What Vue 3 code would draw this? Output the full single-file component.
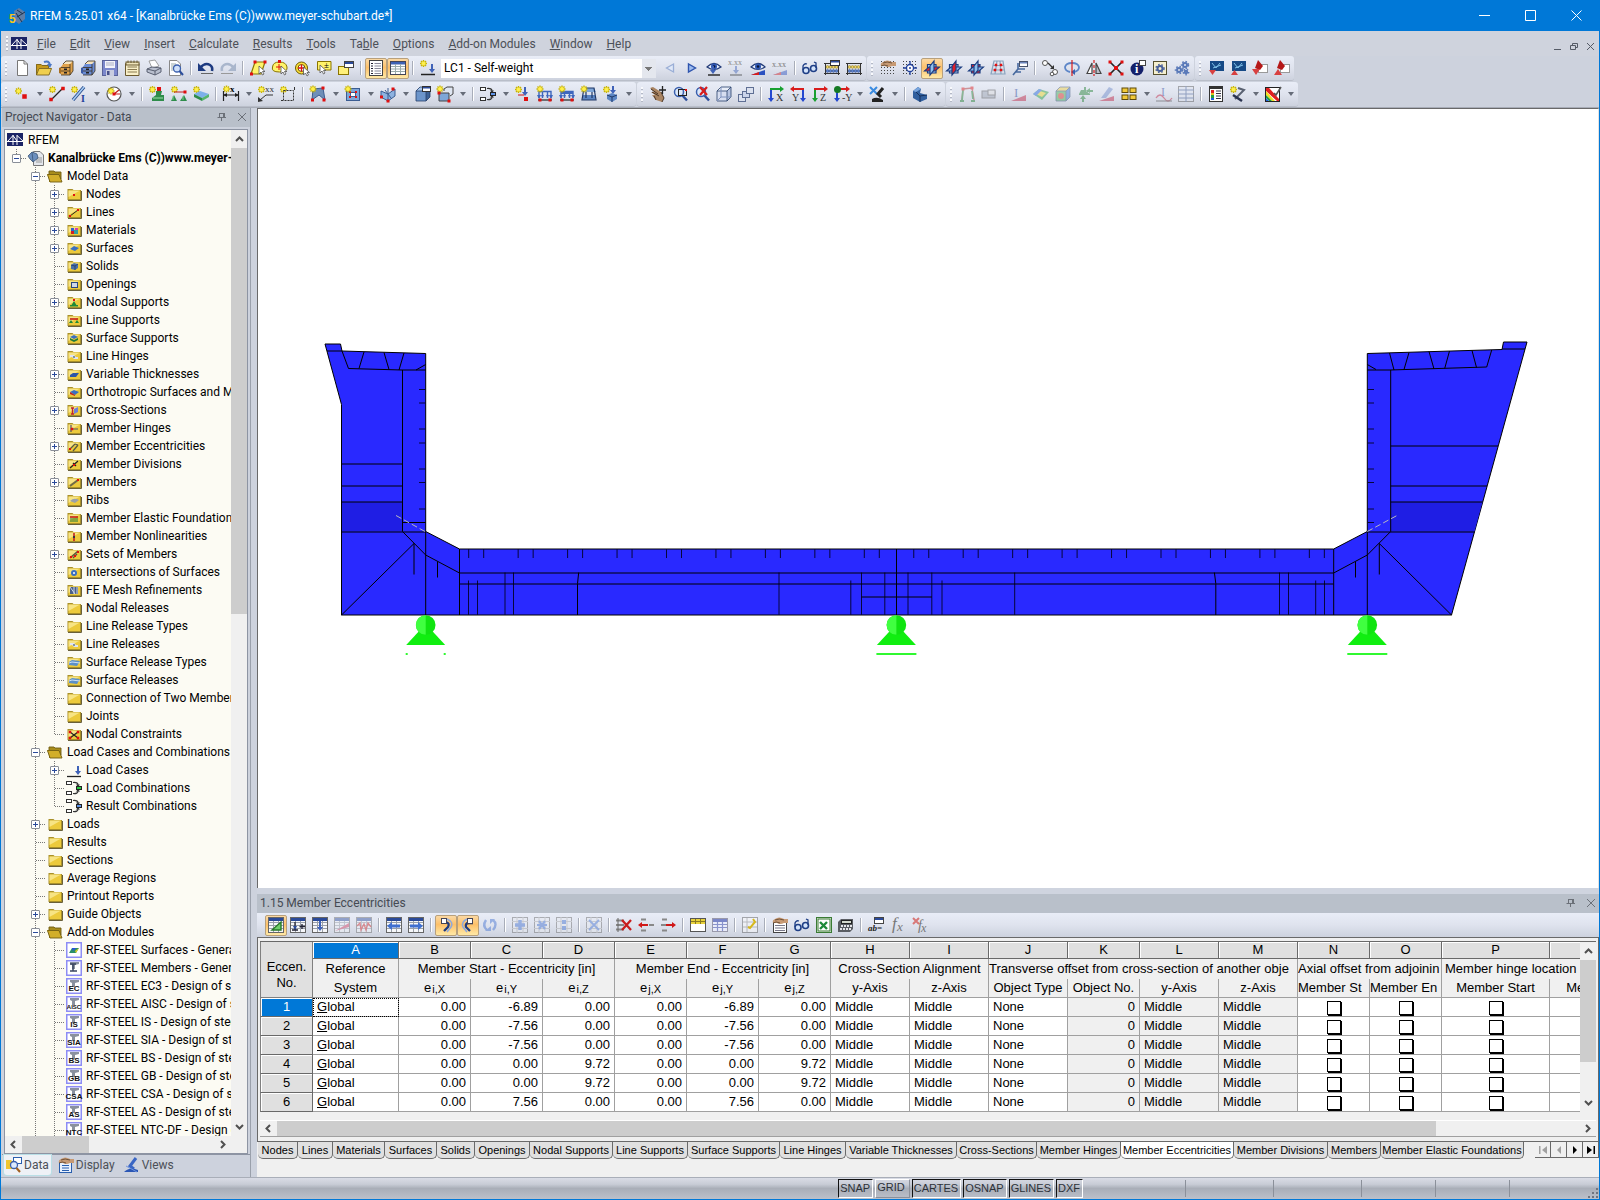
<script setup>
import { ref } from 'vue'

/* ---- small drawing helpers for the 16x16 icon set ---- */
const p = (d, stroke = '#444', w = 1, fill = 'none') =>
  `<path d="${d}" stroke="${stroke}" stroke-width="${w}" fill="${fill}"/>`
const f = (d, fill) => `<path d="${d}" fill="${fill}"/>`
const r = (x, y, w, h, fill = '#fff', stroke = 'none') =>
  `<rect x="${x}" y="${y}" width="${w}" height="${h}" fill="${fill}" stroke="${stroke}"/>`
const c = (x, y, rad, fill = 'none', stroke = 'none', w = 1) =>
  `<circle cx="${x}" cy="${y}" r="${rad}" fill="${fill}" stroke="${stroke}" stroke-width="${w}"/>`
const t = (x, y, s, size = 7, fill = '#444', family = 'Liberation Serif', extra = '') =>
  `<text x="${x}" y="${y}" font-size="${size}" fill="${fill}" font-family="${family}, serif" ${extra}>${s}</text>`
const star = (x = 3.5, y = 3.5) =>
  p(`M${x - 3.5} ${y}H${x + 3.5}M${x} ${y - 3.5}V${y + 3.5}M${x - 2.5} ${y - 2.5}L${x + 2.5} ${y + 2.5}M${x + 2.5} ${y - 2.5}L${x - 2.5} ${y + 2.5}`, '#c9b400', 1.4) +
  c(x, y, 2, '#fff04a')
const dot = (x, y, s = 3) => r(x - s / 2, y - s / 2, s, s, '#e01010')
const cursor = (x, y) => p(`M${x} ${y}l0 8l2 -2l1.500 3l1.500 -1l-1.500 -2.500l2.500 0z`, '#555', 0.8, '#fff')
const down = (x, y, h = 7, col = '#3f62b8') =>
  f(`M${x - 1} ${y}h2v${h - 4}h2l-3 4l-3 -4h2z`, col)
const gridLines = (col = '#9aa0aa') => r(0.5, 0.5, 15, 15, '#f6f7fa', '#666') +
  p('M1 5.500H15M1 8.500H15M1 11.500H15M5.500 3V15M10.500 3V15', col) + r(1, 1, 14, 3, '#2a4a9a')
const dotsGrid = [1, 4, 7, 10, 13].map(y => [1, 4, 7, 10, 13].map(x => r(x, y, 1, 1, '#444')).join('')).join('')
const cube = (a, b, d) => f('M1 5L5 1H15V11L11 15H1Z', b) + f('M1 5H11V15H1Z', a) + f('M1 5L5 1H15L11 5Z', d) +
  p('M1 5L5 1H15V11L11 15H1V5H11V15M11 5L15 1', '#27406a', 0.8)
const lens = c(7, 6, 4.5, '#dbe8fa', '#3a5fae', 1.5) + p('M10.500 9.500L15 14.500', '#2d4f9c', 2.5)
const planes = (m) => f('M3 4H12V13H3Z', m === 3 ? '#e0202a' : '#a9cdf3') + p('M3.500 4.500H12V13H3.500Z', '#1d3d80', 1.2) +
  f('M0 11L5 7H16L11 11Z', m === 1 ? '#e0202a' : '#8fb8ea') + p('M0.500 11L5 7H15.500L11 11Z', '#1d3d80', 1.1) +
  f('M6 6L10 1V10L6 15Z', m === 2 ? '#e0202a' : '#8fc0ee') + p('M6 6L10 1V10L6 15Z', '#1d3d80', 1.2)
const cabinet = (a, b) => f('M1 8L5 6V15L1 13Z', b) + f('M5 4L8 1H15V11L12 15H3V7Z', a) + f('M5 4L8 1H15L12 4Z', '#f6e3bd') +
  p('M3 7.500H12M12 4V15M3 11H12M5 4L8 1H15V11L12 15H3', '#3b3020', 0.8) + r(6, 8.500, 3, 1.500, '#222') + r(6, 12, 3, 1.500, '#222')
const gear = (x, y, s, col) => c(x, y, s, 'none', col, 2) +
  `<circle cx="${x}" cy="${y}" r="${s + 1.5}" fill="none" stroke="${col}" stroke-width="1.500" stroke-dasharray="1.500 1.800"/>`
const hand = f('M3 2Q7 -1 12 2L16 2V6H12Q8 8 5 6L1 6Q0 3 3 2Z', '#c79a74') + p('M3 3Q7 1 12 3M1 6Q4 4 8 6', '#5b4029', 0.8)
const glasses = c(4, 10.500, 3, '#d3e3fb', '#1f3f86', 1.600) + c(11.500, 8.500, 3, '#d3e3fb', '#1f3f86', 1.600) + p('M1 10V6Q2 3 5 4M14 8V3L12 2', '#1f3f86', 1.300)
const abacus = p('M1.500 3V15M14.500 3V15M0 3.500H16M0 13.500H16', '#333') +
  [4, 7, 10, 13].map(x => c(x - 0.5, 7, 1.4, '#f6d95c', '#7b6a20', 0.5) + c(x - 0.5, 11, 1.4, '#5f86d4', '#27407a', 0.5)).join('')
const loadFrame = p('M2 12V5.500H14V12M5.500 6V12M10.500 6V12', '#3e66bd', 1.400) + f('M0 9H4L2 13ZM12 9H16L14 13ZM4 9H7L5.500 12ZM9 9H12L10.500 12Z', '#3e66bd') + p('M1 14H15', '#333', 1.300) + dot(3, 14) + dot(13, 14)
const axes = (a, b, lab) => p('M3 2V14', b, 2) + p('M2 3H13', a, 2) + f('M12 0L16 3L12 6Z', a) + f('M0 12H6L3 16Z', b) + t(8, 15, lab, 10, '#333')
const eye = p('M1 7Q8 0 15 7Q8 12 1 7Z', '#223b78', 1.200, '#e8effb') + c(8, 6.500, 3, '#2e57b3') + c(8, 6.500, 1.200, '#0a1430')
const comb = (col) => r(0.5, 1.500, 5, 3, '#fff', '#333') + r(0.5, 11.500, 5, 3, '#fff', '#333') +
  p('M7 2.500Q12 2 12 5M7 13.500Q12 14 12 11', '#333', 1.200) + f('M10 4.500H14L12 7ZM10 11.500H14L12 9Z', '#333') + r(10.500, 6.500, 5, 3, col, '#222')
const faded = s => `<g opacity="0.45">${s}</g>`

const I = {
  page: p('M3.500 0.500H10L13.500 4V15.500H3.500Z', '#777', 1, '#fff') + p('M10 0.500V4H13.500', '#777'),
  open: f('M0 4H5L6 5H13V15H0Z', '#c79a1c') + f('M3 8H16L13 15H0Z', '#f0cf4e') + p('M0.500 15V4.500H5L6 5.500H12.500V8M0.500 15L3 8.500H15.500L13 15Z', '#7b6420', 0.9) + p('M8 2Q13 0 14 5', '#4c78c4', 2) + f('M11 4H16L14 8Z', '#4c78c4'),
  cabO: cabinet('#e0a24c', '#a86f22'),
  cabB: cabinet('#6a8cd6', '#3b5aa5'),
  save: r(0.5, 0.5, 15, 15, '#7c88cc', '#5a6399') + r(3, 1, 10, 7, '#f4f4fa') + r(4, 10, 8, 6, '#c9cde0') + r(5, 11, 2.500, 4, '#47508a') + p('M4 3H12M4 5H12', '#a9adc4'),
  book: p('M1.500 3.500H15V15.500H1.500Z', '#6b5a30', 1, '#f8efc8') + p('M3.500 7H13M3.500 9.500H13M3.500 12H13', '#8a7a50') + r(2, 2, 13, 3, '#efe4bb', '#6b5a30') + p('M4 0.500V3M7 0.500V3M10 0.500V3M13 0.500V3', '#6b5a30'),
  print: f('M3 1L9 0L13 6L6 8Z', '#fff') + p('M3 1L9 0L13 6L6 8Z', '#888', 0.8) + f('M1 9L6 7L15 8V12L9 15L1 12Z', '#b9bfce') + p('M1 9L6 7L15 8V12L9 15L1 12ZM1 9L9 11L15 8M9 11V15', '#4e5566', 0.9),
  preview: p('M1.500 0.500H9L12.500 4V15.500H1.500Z', '#888', 1, '#fff') + p('M3 4H8M3 6H10M3 8H7M3 10H6', '#9aa', 1) + c(9, 8.500, 3.500, '#cfe0fa', '#3a5fae', 1.300) + p('M11.500 11L15 15', '#2d4f9c', 2),
  undo: p('M2 8Q7 2 12 5Q15 7 14 11', '#1d3a80', 2.600) + f('M0 3V11H8Z', '#1d3a80') + p('M3 13.500H15', '#666'),
  redo: p('M14 8Q9 2 4 5Q1 7 2 11', '#a9b6cc', 2.600) + f('M16 3V11H8Z', '#a9b6cc') + p('M1 13.500H13', '#999'),
  selPoly: p('M1 14L5 2H15L11 14Z', '#8a7400', 1.200, '#fff36a') + dot(5, 2) + dot(15, 2) + dot(1.500, 14) + cursor(9, 6),
  selCirc: p('M0.500 7Q1 2 7.500 2T15 7T7.500 12T0.500 7Z', '#8a7400', 1, '#fff36a') + p('M4 7H10M7 4V10', '#e01010') + dot(7.500, 1.500) + cursor(9, 6),
  selRing: c(7.500, 8, 6, '#ffe23a', '#6b5a00', 1) + c(7.500, 8, 3.500, '#fff', '#6b5a00', 1) + p('M4 8H11M7.500 4.500V11.500', '#e01010', 1.300) + cursor(9.500, 7),
  selBox: p('M1.500 1.500H15V10H1.500Z', '#8a7400', 1, '#fff36a') + t(8, 8, '±', 9, '#000') + cursor(4, 5),
  selWin: r(0.5, 6.500, 10, 8, '#fff07a', '#8a7400') + r(6.500, 1.500, 9, 6, '#fff', '#444') + r(7, 2, 8, 2, '#2a4a9a'),
  list: r(1.500, 0.5, 13, 15, '#fff', '#444') + p('M3 3.500H5M3 6H5M3 8.500H5M3 11H5M3 13.500H5', '#223') + p('M6.500 3.500H13M6.500 6H13M6.500 8.500H13M6.500 11H13M6.500 13.500H13', '#889'),
  tabl: r(0.5, 1.500, 15, 13, '#fff', '#445') + r(1, 2, 14, 2.500, '#3e62b4') + p('M1 6.500H15M1 9H15M1 11.500H15M5.500 4V14M10.500 4V14', '#9aa'),
  newLC: star() + p('M1 14.500H15', '#222', 1.500) + down(12, 4, 9),
  prev: p('M11.500 4V12L4.500 8Z', '#9aaed6', 1.300, '#dfe8f8'),
  next: p('M4.500 4V12L11.500 8Z', '#2f55ae', 1.400, '#9dbcf0'),
  showLoad: eye + p('M2 15H14', '#222', 1.400) + down(7, 6, 8),
  xxx: t(0, 5, 'x.xx', 8, '#888') + faded(down(8, 6, 8) + p('M2 15H14', '#222', 1.400)),
  eyeRes: eye + f('M1 15L15 10V15Z', '#2b51c0') + f('M1 15L9 12V15Z', '#d81c1c'),
  xxRes: t(0, 7, 'x.xx', 8, '#777') + faded(f('M1 15L15 10V15Z', '#2b51c0') + f('M1 15L9 12V15Z', '#d81c1c')),
  glasses,
  abacus, abacusWin: abacus + r(6.500, 0.5, 9, 5, '#fff', '#333') + r(7, 1, 8, 1.500, '#2a4a9a'),
  handGrid: dotsGrid + hand,
  snapGrid: dotsGrid + p('M8 1V15M1 8H15', '#1f3f9a', 1.300) + c(8, 8, 3.500, '#fff', '#1f3f9a', 1.300) + c(8, 8, 1, '#1f3f9a'),
  pl1: planes(1), pl2: planes(2), pl3: planes(3),
  mesh: p('M4 1H13L15 14H1ZM7 1L5 14M10 1L11 14M3 5.500H14M2 10H14.500', '#8aa3bd', 1.200) + dot(6, 5, 2.500) + dot(11, 10, 2.500) + dot(11, 5, 2.500) + dot(5, 10, 2.500),
  wp: r(7.500, 1.500, 8, 5, '#fff', '#46506a') + r(8, 2, 7, 1.500, '#6c86bd') + p('M1 15L6 9V3M6 9H13M3 12L9 12', '#46689e', 1.600),
  copy: c(3, 3, 2.500, '#fff', '#555') + c(13, 12, 2.500, '#fff', '#555') + c(10, 14, 1.800, '#fff', '#555') + p('M6 3L11 8', '#333', 1.200) + f('M12 5V9H8Z', '#333'),
  rotate: p('M6 12Q1 11 1 7Q2 3 8 3T15 7Q15 11 10 12', '#5d86c8', 1.800) + f('M11 9V15L7 12Z', '#3a62ae') + p('M8 0V16', '#d81c1c', 1.200),
  mirror: p('M1 13.500L6 3V13.500Z', '#444', 1.200, '#fff') + p('M15 13.500L10 3V13.500Z', '#444', 1.200, '#b9bec8') + p('M8 0V3M8 5V8M8 10V13M8 14V16', '#d81c1c', 1.200),
  scale: p('M2 2L14 14M14 2L2 14', '#222', 1.600) + dot(2, 2) + dot(14, 2) + dot(2, 14) + dot(14, 14) + dot(8, 8, 4),
  info: c(7, 9, 6.500, '#14206a') + t(5, 13, 'i', 12, '#fff', 'Liberation Serif', 'font-weight="bold"') + r(9.500, 0.5, 6, 5, '#fff', '#444'),
  setWin: r(1.500, 1.500, 13, 13, '#f5efcf', '#55502f') + gear(8, 8.500, 2.500, '#49609a'),
  gears: gear(5, 10, 2, '#5878b8') + gear(11, 5, 2, '#5878b8') + gear(12, 12, 1.200, '#5878b8'),
  scrDown: r(2, 1, 14, 10, '#164a86') + p('M4 3L8 8L12 3M5 8L13 5', '#7fc1e8') + f('M1 10H8L4.500 15Z', '#d84040'),
  scrUp: r(2, 1, 14, 10, '#164a86') + p('M4 3L8 8L12 3M5 8L13 5', '#7fc1e8') + f('M1 15H8L4.500 10Z', '#d84040'),
  pdfDown: r(6.500, 4.500, 9, 8, '#fff', '#999') + f('M6 0L11 6L8 10L3 8Z', '#b51818') + f('M0 9H8L4 15Z', '#d84040'),
  pdfUp: r(6.500, 4.500, 9, 8, '#fff', '#999') + f('M6 0L11 6L8 10L3 8Z', '#b51818') + f('M0 15H8L4 9Z', '#d84040'),
  // second row
  node: star(4.500, 5) + dot(10.500, 10.500, 4.500),
  line: star() + p('M2 14L14 2', '#222', 1.300) + dot(14, 2.500, 3.500) + dot(2, 13.500, 3.500),
  member: star() + p('M2 14L13 1', '#2a4f8e', 3.400) + p('M2 14L13 1', '#a8cdf5', 1.600) + t(10, 16, 'I', 10, '#1f3f9a', 'Liberation Serif', 'font-weight="bold"'),
  circle: c(8, 8, 7, '#fff', '#555', 1.200) + star(5, 5) + p('M8 8L13 4M8 8H14', '#c02020', 1.200) + dot(8, 8, 3),
  nsup: star() + dot(10, 3, 4) + f('M7 5H13L12 9H15V15H3V12L7 9Z', '#2e8c4a') + p('M4 12L14 12', '#9be0a8'),
  lsup: star() + p('M3 6H14', '#c02020') + dot(14, 6) + f('M3 9L6 15H0ZM13 9L16 15H9Z', '#2e8c4a') + p('M2 10V14M12 10V14', '#7dcf8f'),
  ssup: star() + f('M1 8L7 5L16 8L9 12Z', '#7db0ea') + f('M1 8L9 12V15L1 11Z', '#2e8c4a') + f('M16 8L9 12V15L16 11Z', '#56b56d'),
  dim: star(3.500, 3) + p('M0.500 5V15M15.500 5V15M1 9H15', '#222', 1.200) + f('M0 9L4 7V11ZM16 9L12 7V11Z', '#222') + t(7, 6, 'x', 9, '#000', 'Liberation Serif', 'font-weight="bold"'),
  xx: star() + t(7, 6, 'xx', 9, '#333') + p('M2 14L8 9H15', '#333') + f('M0 16V11L5 15Z', '#333'),
  dashBox: star() + `<rect x="3.500" y="4.500" width="10" height="10" fill="none" stroke="#333" stroke-dasharray="2 1"/>` + p('M14.500 1V4M1 14.500H3', '#333'),
  surf: f('M3 3L13 2L15 14L9 9L2 14Z', '#6f8fb8') + p('M3 3L13 2L15 14L9 9L2 14Z', '#3b5d92') + star(3, 3) + dot(13, 2) + dot(2.500, 14) + dot(14, 14),
  opening: r(1.500, 2.500, 13, 12, '#7ea6d8', '#3b5d92') + r(5.500, 6.500, 5, 4, '#fff', '#3b5d92') + dot(5, 6, 2) + dot(11, 6, 2) + dot(5, 11, 2) + dot(11, 11, 2) + star(3, 3),
  inter: f('M1 5L8 8L15 3V10L8 15L1 11Z', '#8db2e0') + p('M1 5L8 8L15 3V10L8 15L1 11ZM8 2V15M5 4L11 12', '#3b5d92') + dot(13, 3) + dot(1.500, 11) + dot(8, 15),
  solid: cube('#6c95cb', '#3c6297', '#a9c7ec') + r(7.500, 0.5, 8, 5, '#fff', '#333') + r(8, 1, 7, 1.500, '#2a4a9a'),
  solid2: star(3, 3) + f('M2 7H12V15H2Z', '#7ea6d8') + f('M7 4V1H15V10H12V5H7Z', '#dfe6f2') + p('M2 7H12V15H2ZM7 5V3L10 1H16V8L13 10', '#444') + dot(2, 7) + dot(12, 15),
  comb: comb('#5f93e6'),
  load1: star() + down(10, 1, 9) + p('M3 9L9 9', '#d01010') + dot(11, 13, 4),
  load2: loadFrame + star(3, 3), load3: loadFrame + p('M2 7H14', '#3e66bd', 2) + star(3, 3),
  load4: f('M3 2H13L15 6H1Z', '#7ea6d8') + r(2, 9, 12, 5, '#5c86c4') + p('M3 2H13L15 14H1ZM5 6V12M11 6V12', '#1f3766', 1.200) + star(3, 3),
  load5: star() + down(10, 0, 8) + f('M4 9L9 7L14 9V13L9 16L4 13Z', '#5c86c4') + p('M4 9L9 11L14 9M9 11V16', '#1f3766'),
  handMove: f('M0 2L3 1L11 6L14 12L12 16L6 14L2 9L5 9L1 6L4 6Z', '#a98462') + p('M1 3L8 8M2 6L9 10M6 14L4 10M11 6L14 12L12 16', '#4b3626', 1) + p('M12.500 0V8M9 4H16', '#222', 1.300),
  zoomBox: lens + r(6.500, 3.500, 8, 6, 'none', '#222') + dot(14, 4, 2),
  zoomX: lens + p('M6 1L13 9M13 1L6 9', '#d81c1c', 2.200),
  wire: cube('#d7def0', '#b6c3e0', '#e8edf8') + p('M5 1V11L1 15M5 11H15', '#7f92bd'),
  cubes: r(0.5, 8.500, 7, 7, '#dbe1ef', '#5f6f94') + r(4.500, 5.500, 7, 6, '#cbd4ea', '#5f6f94') + r(8.500, 1.500, 7, 6, '#dbe1ef', '#5f6f94'),
  axX: axes('#18a030', '#2448d0', 'X'), axY: p('M13 2V14', '#2448d0', 2) + p('M3 3H14', '#d81c1c', 2) + f('M4 0L0 3L4 6Z', '#d81c1c') + f('M10 12H16L13 16Z', '#2448d0') + t(2, 15, 'Y', 10, '#333'),
  axZ: axes('#d81c1c', '#18a030', 'Z'), axmY: axes('#d81c1c', '#2448d0', '-Y') + c(3.500, 3.500, 3.500, '#157a25'),
  micro: p('M1 1L8 8M8 1L1 8', '#3a8be0', 2) + p('M14 2L9 8L12 11', '#222', 3) + f('M3 13Q8 10 14 14V16H3Z', '#222'),
  clip: f('M1 5L6 1L9 3L8 7L15 9V13L8 16L1 12Z', '#315f9e') + f('M1 5L6 1L9 3L4 6Z', '#79a5dd') + p('M4 6L8 10L15 9M8 10V16', '#16315c'),
  frame: faded(p('M3 14L4 3L13 2L15 14', '#b03030', 1.400) + p('M1 15H5M12 15H16M3 14L4 4M13 5L14 13', '#208030', 1.800) + dot(4, 3) + dot(13, 2)),
  flash: faded(r(1, 5, 13, 7, '#9aa2b0', '#555') + r(7, 4, 7, 5, '#ddd', '#555')),
  resI: faded(t(3, 11, 'I', 13, '#1f3f9a') + f('M0 15L15 9V15Z', '#c02040')),
  rainbow: faded(f('M0 8L6 3L16 6L9 14Z', '#25a040') + f('M3 8L7 5L13 7L9 11Z', '#f0d820') + f('M0 8L6 3L9 4L3 10Z', '#2060e0')),
  rcube: faded(cube('#40b050', '#3070d0', '#f0d040') + c(6, 10, 3, '#e03020')),
  greenArr: faded(p('M8 1V6M10 5H16M6 12V16', '#208030', 2) + f('M4 4H11L13 8H2ZM2 8H13V9H2ZM13 2L9 5L13 8ZM6 9L9 13H3Z', '#208030')),
  pen: faded(f('M2 12L10 1L14 3L7 12Z', '#6a88c8') + f('M0 15L15 10V15Z', '#c02040')),
  quad: [[1, 2], [9, 2], [1, 9], [9, 9]].map(([x, y]) => r(x, y, 6, 4.500, '#f1c93a', '#5e4a08')).join(''),
  beam: faded(t(5, 10, 'I', 12, '#1f3f9a') + p('M0 12Q4 6 8 12T16 12', '#c02040', 1.300) + p('M0 15H16', '#333')),
  gridI: faded(r(0.5, 0.5, 15, 15, '#dfe4f0', '#555') + p('M8 0V16M0 4H16M0 8H16M0 12H16', '#34508c')),
  legend: r(1.500, 0.5, 13, 15, '#fff', '#333') + p('M2 2H14', '#333', 2) + r(3, 4, 3, 3, '#e02020') + r(3, 7, 3, 2, '#e8c020') + r(3, 9, 3, 3, '#20a040') + r(3, 12, 3, 2, '#2060e0') + p('M8 5H13M8 7.500H13M8 10H13M8 12.500H13', '#334'),
  tools: star() + p('M8 2L14 4L5 13', '#5a6272', 2) + p('M3 9L12 15', '#2a3350', 2.500),
  colors: r(0.5, 1.500, 14, 14, '#fff', '#222') + f('M1 2H4L14 13V15H12L1 5Z', '#e02020') + f('M1 5L10 15H7L1 9Z', '#f0e020') + f('M1 9L7 15H4L1 12Z', '#20a040') + f('M1 12L4 15H1Z', '#2060e0') + p('M9 7L11 9L16 1', '#555', 1.600),
  // table toolbar
  tEdit: gridLines() + f('M4 13L13 5V13Z', '#6fd06a') + p('M4 13L13 5V13Z', '#2a7a2a', 1.400),
  tPlus: gridLines() + p('M5 5V13M2 13H8M12 7V12M9.500 9.500H15', '#223', 1.300) + f('M3 9H7L5 13Z', '#2a4a9a'),
  tDown: gridLines() + down(8, 4, 10),
  tRes: faded(gridLines() + f('M1 14L15 6V10Z', '#d04060')),
  tWave: faded(gridLines() + p('M1 9L4 6L5 13L8 7L10 13L12 6L15 10', '#d02020', 1.300)),
  tLeft: gridLines() + f('M1 9L6 5V7.500H14V10.500H6V13Z', '#3f6fd0'),
  tRight: gridLines() + f('M15 9L10 5V7.500H2V10.500H10V13Z', '#3f6fd0'),
  sync1: p('M3 5H8Q12 6 10 10L6 14', '#1d3a80', 2.300) + p('M9 2Q16 5 13 10L9 15', '#8fa9dc', 1.500) + r(3.500, 1.500, 5, 5, '#fff', '#445'),
  sync2: p('M13 6H9Q5 6 6 10L10 14', '#1d3a80', 2.300) + p('M7 2Q1 5 3 10L7 15', '#8fa9dc', 1.500) + r(7.500, 1.500, 5, 5, '#fff', '#445'),
  sync3: faded(p('M4 3Q0 9 5 13M11 13Q16 7 11 3', '#3f6fd0', 2.400) + f('M3 14H9V9ZM13 2H8V7Z', '#3f6fd0')),
  gPlus: faded(r(0.5, 0.5, 15, 15, '#e9ecf2', '#666') + p('M0 4.500H16M0 11.500H16M5 0V16M11 0V16', '#aaa') + p('M8 3V13M3 8H13', '#3f6fd0', 3.500)),
  gX: faded(r(0.5, 0.5, 15, 15, '#e9ecf2', '#666') + p('M0 4.500H16M0 11.500H16M5 0V16M11 0V16', '#aaa') + p('M5 4L11 12M11 4L5 12M3 8H13', '#3f6fd0', 2.200)),
  gDiv: faded(r(0.5, 0.5, 15, 15, '#e9ecf2', '#666') + p('M0 4.500H16M0 11.500H16M5 0V16M11 0V16', '#aaa') + r(6, 3, 4, 4, '#3f6fd0') + r(6, 9, 4, 4, '#3f6fd0')),
  gDel: faded(r(0.5, 0.5, 15, 15, '#e9ecf2', '#666') + p('M0 4.500H16M0 11.500H16M5 0V16M11 0V16', '#aaa') + p('M3 3L13 13M13 3L3 13', '#3f6fd0', 1.800)),
  rDel: p('M0 3.500H8M0 8H8M0 12.500H8', '#888', 1.800) + p('M2 1V15', '#666', 1) + p('M6 3L15 13M15 3L6 13', '#c81c1c', 2.300),
  rLeft: p('M8 2.500H3M8 13.500H3M11 8H16', '#888', 2) + f('M0 8L4 5V7H10V9H4V11Z', '#d01818'),
  rRight: p('M2 2.500H7M2 13.500H7M1 8H6', '#888', 2) + f('M16 8L12 5V7H6V9H12V11Z', '#d01818'),
  yTab: r(0.5, 1.500, 15, 13, '#fff', '#555') + r(1, 2, 14, 5, '#e8d23c') + p('M5.500 2V7M10.500 2V7M1 4.500H15', '#8a7a20'),
  bTab: r(0.5, 1.500, 15, 13, '#e9ecfa', '#99a') + r(1, 2, 14, 3, '#7a86c8') + p('M1 7.500H15M1 10.500H15M5.500 5V14M10.500 5V14', '#8a94cc', 1.200),
  yPen: faded(r(0.5, 0.5, 15, 15, '#fff', '#555') + p('M1 5H15M1 10H15M5 1V15', '#888')) + p('M11 2L13 5L8 11L6 10', '#d6b81c', 2),
  handDoc: r(1.500, 4.500, 13, 11, '#fff', '#444') + p('M3 8.500H13M3 11H13M3 13.500H13', '#778') + hand,
  excel: r(0.5, 0.5, 15, 15, '#e9f4e6', '#3a7a34') + r(2, 2, 12, 12, '#fff', '#3a7a34') + p('M4 5L11 12M11 5L4 12', '#1f8a3a', 2.400),
  calc: f('M3 2H15V12L12 15H0V5Z', '#5a5d63') + r(3.500, 3.500, 10, 3, '#d4dacf', '#222') + [3, 6, 9, 12].map(x => r(x, 8, 2, 2, '#e6e6ea') + r(x - 1, 11, 2, 2, '#e6e6ea')).join(''),
  abEq: r(6.500, 0.5, 9, 6, '#fff', '#444') + r(7, 1, 8, 2, '#2a4a9a') + t(0, 14, 'ab=', 9, '#222', 'Liberation Serif', 'font-weight="bold" font-style="italic"'),
  fx: t(2, 12, 'f', 17, '#777', 'Liberation Serif', 'font-style="italic"') + t(7, 14, 'x', 13, '#777', 'Liberation Serif', 'font-style="italic"'),
  fxx: t(6, 13, 'f', 14, '#777', 'Liberation Serif', 'font-style="italic"') + t(9, 15, 'x', 12, '#777', 'Liberation Serif', 'font-style="italic"') + p('M1 1L7 7M7 1L1 7', '#d87878', 2),
  // navigation tabs
  navData: f('M0 3H5L6 4H11V12H0Z', '#f0c52e') + r(7.500, 0.5, 8, 6, '#fff', '#2a5fae') + c(8, 8, 3.500, '#dceaff', '#3a5fae', 1.300) + p('M10.500 11L14 15', '#a06020', 2),
  navDisp: r(1.500, 4.500, 12, 11, '#e9f1fd', '#2a5fae') + p('M4 8.500H11M4 11H11M4 13.500H11', '#2a5fae') + hand,
  navView: f('M0 15Q6 9 14 13V15Z', '#2a56b4') + p('M12 1L6 9L10 12', '#3a66c4', 3) + p('M2 9L13 15', '#6f95e0'),
  // tree
  logo: r(0, 1, 16, 13, '#1b2465') + p('M0 9.500H16M1 9L6 3.500L10 9M6 3V13M10 3V13M10 3.500L16 9', '#fff', 1),
  model: p('M5.500 1.500H12L15.500 5V15.500H5.500Z', '#777', 1, '#e4e7ec') + p('M8 8H14M8 10H14M8 12H14', '#999') + f('M0 6L4 2L9 4L10 8L5 12L2 9Z', '#6c8fbe') + p('M0 6L4 2L9 4L10 8L5 12L2 9ZM4 2L5 12', '#3b5577', 0.8),
}
const folder = f('M1.500 3H6.500L7.500 4H15V14H1.500Z', '#a8902a') + f('M2.500 4.500H14V13H2.500Z', '#ecca3c') + f('M2.500 4.500H14L2.500 11Z', '#f7e484') + p('M2 14.500H15.500V5', '#69603a')
const folderOpen = f('M2 3H7L8 4H14V14H2Z', '#a88c1a') + f('M0 6H12L15 14H3Z', '#d2ae2a') + p('M0.500 6.500H12L15 14H3ZM2 6V3H7L8 4H14V11', '#6f5c12', 0.9)
const mini = {
  dot: dot(8, 9, 2), line: p('M4 12L12 6', '#222') + dot(12, 6, 2) + dot(4, 12, 2),
  mat: r(5, 6, 3, 3, '#3060d0') + r(5, 9, 3, 3, '#d02020') + r(8, 8, 4, 4, '#30a0a0') + r(9, 6, 3, 2, '#d040b0'),
  surf: f('M4 9L8 6L13 8L9 11Z', '#3a6fc0'), solid: f('M5 7L8 5L12 6V10L9 12L5 11Z', '#4a6fa8') + p('M5 7L9 8V12M9 8L12 6', '#223c66', 0.8),
  open: r(5.500, 6.500, 6, 5, '#cfd8e8', '#2b4a80'), ns: dot(8, 6, 2) + f('M8 7L11 12H5Z', '#1f8a3a') + r(4, 11, 8, 1.500, '#1f8a3a'),
  ls: p('M4 7H12', '#c01010', 1.500) + f('M5 8L7 11H3ZM11 8L13 11H9Z', '#1f8a3a'), ss: f('M4 7L8 5L12 7L8 9Z', '#3a6fc0') + f('M4 8L8 10V12L4 10ZM12 8L8 10V12L12 10Z', '#1f7a3a'),
  hinge: f('M4 7H8L10 9H12V11H8L6 9H4Z', '#dfe5f2') + c(8, 9, 1, '#678'), thick: f('M4 9L7 7H13L10 11H4Z', '#2a56a8'),
  ortho: f('M4 8L8 6L13 8L9 11Z', '#3a6fc0') + f('M4 8L9 11V12L4 10Z', '#c02020'), cs: p('M5 6H8M5 12H8M6.500 6V12', '#c02030', 1.300) + f('M8 7L12 5V10L8 12Z', '#6f80d8'),
  mh: p('M5 5V12M6 9H12', '#556', 1.200) + dot(6, 9, 2.500), ecc: p('M4 11L9 6M7 13L12 7M9 6L12 7', '#5a5a40', 1.300) + dot(4, 11, 2), div: p('M4 12L12 5M7 7L10 10', '#222', 1.300) + dot(8, 9, 2),
  mem: p('M4 12L12 6', '#6f6a4a', 2) + dot(12, 6, 2), rib: f('M4 9Q8 5 13 8L9 11Z', '#9aa0a8'), el: p('M4 7H12', '#c01010', 1.500) + p('M5 8V12M7 8V12M9 8V12M11 8V12', '#1f7a3a'),
  nl: p('M8 5V13', '#c02020', 1.600) + r(7, 8, 2, 2, '#334'), sets: p('M4 12L12 5M7 12L11 8', '#554', 1.300) + dot(12, 6, 2) + dot(5, 11, 2) + dot(9, 10, 2),
  ints: c(8, 9, 3, '#3a6fc0') + c(8, 9, 1, '#fff'), fe: r(4, 5, 8, 7, '#4a5f88') + p('M4 5L9 12M8 5V12M11 5V12', '#cfd8e8'), rel: f('M3 8L6 6L14 7L11 12L3 11Z', '#5a8fc8') + p('M3 9L6 8L14 9', '#cfe2f6'),
  con: p('M4 6L12 12M12 6L4 12', '#222', 1.200) + dot(4, 6, 2.500) + dot(12, 6, 2.500) + dot(4, 12, 2.500) + dot(12, 12, 2.500),
}
const modIcon = s => r(1, 1, 14, 14, '#fff', '#8d8df5') + r(0.5, 0.5, 15, 15, 'none', '#8d8df5') +
  (s === 'sf' ? f('M3 11L6 6H13L10 11Z', '#2a8f6a') + f('M6 6H10L7 9Z', '#2a50e0') + f('M9 9L13 6L10 11Z', '#e0d020')
    : f('M4 2H13V4L9 5V9H6V5L4 4Z', '#8a919e') + (s === 'I' ? p('M4 4H10M4 11H11M7 4V11', '#3a4660', 1.500) : t(8, 13, s, s.length > 3 ? 6 : 8, '#111', 'Liberation Sans', 'text-anchor="middle" font-weight="bold"')))
const treeIcon = k => k === 'f' ? folder : k === 'fo' ? folderOpen : k === 'lc' ? p('M1 14.500H15', '#222', 1.300) + down(12, 4, 9)
  : k === 'co' ? comb('#28c840') : k === 'rc' ? comb('#5f93e6') : k.startsWith('m:') ? modIcon(k.slice(2)) : mini[k] ? folder + mini[k] : I[k]

const N = (lv, label, icon = 'f', ex = '', last = false) => ({ lv, label, icon, ex, last })
const rows = [
  N(0, 'RFEM', 'logo'), N(1, 'Kanalbrücke Ems (C))www.meyer-schubart.de*', 'model', '-', true), N(2, 'Model Data', 'fo', '-'),
  N(3, 'Nodes', 'dot', '+'), N(3, 'Lines', 'line', '+'), N(3, 'Materials', 'mat', '+'), N(3, 'Surfaces', 'surf', '+'), N(3, 'Solids', 'solid'),
  N(3, 'Openings', 'open'), N(3, 'Nodal Supports', 'ns', '+'), N(3, 'Line Supports', 'ls'), N(3, 'Surface Supports', 'ss'), N(3, 'Line Hinges', 'hinge'),
  N(3, 'Variable Thicknesses', 'thick', '+'), N(3, 'Orthotropic Surfaces and Membranes', 'ortho'), N(3, 'Cross-Sections', 'cs', '+'), N(3, 'Member Hinges', 'mh'),
  N(3, 'Member Eccentricities', 'ecc', '+'), N(3, 'Member Divisions', 'div'), N(3, 'Members', 'mem', '+'), N(3, 'Ribs', 'rib'), N(3, 'Member Elastic Foundations', 'el'),
  N(3, 'Member Nonlinearities', 'nl'), N(3, 'Sets of Members', 'sets', '+'), N(3, 'Intersections of Surfaces', 'ints'), N(3, 'FE Mesh Refinements', 'fe'),
  N(3, 'Nodal Releases'), N(3, 'Line Release Types'), N(3, 'Line Releases', 'hinge'), N(3, 'Surface Release Types', 'rel'), N(3, 'Surface Releases', 'rel'),
  N(3, 'Connection of Two Members'), N(3, 'Joints'), N(3, 'Nodal Constraints', 'con', '', true),
  N(2, 'Load Cases and Combinations', 'fo', '-'), N(3, 'Load Cases', 'lc', '+'), N(3, 'Load Combinations', 'co'), N(3, 'Result Combinations', 'rc', '', true),
  N(2, 'Loads', 'f', '+'), N(2, 'Results'), N(2, 'Sections'), N(2, 'Average Regions'), N(2, 'Printout Reports'), N(2, 'Guide Objects', 'f', '+'), N(2, 'Add-on Modules', 'fo', '-'),
  N(3, 'RF-STEEL Surfaces - General', 'm:sf'), N(3, 'RF-STEEL Members - General', 'm:I'), N(3, 'RF-STEEL EC3 - Design of steel', 'm:EC'),
  N(3, 'RF-STEEL AISC - Design of steel', 'm:AISC'), N(3, 'RF-STEEL IS - Design of steel', 'm:IS'), N(3, 'RF-STEEL SIA - Design of steel', 'm:SIA'),
  N(3, 'RF-STEEL BS - Design of steel', 'm:BS'), N(3, 'RF-STEEL GB - Design of steel', 'm:GB'), N(3, 'RF-STEEL CSA - Design of steel', 'm:CSA'),
  N(3, 'RF-STEEL AS - Design of steel', 'm:AS'), N(3, 'RF-STEEL NTC-DF - Design of steel', 'm:NTC'),
]

/* toolbars: "|" separator, "v" drop arrow, "*" prefix = pressed, "=" load case box */
const s = str => str.split(' ')
const bars1 = [
  s('page open cabO cabB save book print preview | undo redo | selPoly selCirc selRing selBox selWin | *list *tabl | newLC = prev next showLoad xxx eyeRes xxRes | glasses abacusWin abacus'),
  s('handGrid snapGrid *pl1 pl2 pl3 mesh wp | copy rotate mirror scale info setWin gears'),
  s('scrDown scrUp pdfDown pdfUp'),
]
const bars2 = [
  s('node v line member v circle v | nsup lsup ssup | dim v xx dashBox | surf v opening v inter v solid solid2 v | comb v load1 load2 load3 load4 load5 v'),
  s('handMove zoomBox zoomX wire cubes | axX axY axZ axmY v micro v | clip v'),
  s('frame flash | resI rainbow rcube greenArr pen quad v beam gridI | legend tools v colors v'),
]
const tableBar = [s('*tEdit tPlus tDown tRes tWave | tLeft tRight | *sync1 *sync2 sync3 | gPlus gX gDiv | gDel | rDel rLeft rRight | yTab bTab | yPen | handDoc glasses excel calc | abEq fx fxx')]

const menu = [['', 'F', 'ile'], ['', 'E', 'dit'], ['', 'V', 'iew'], ['', 'I', 'nsert'], ['', 'C', 'alculate'], ['', 'R', 'esults'], ['', 'T', 'ools'], ['Ta', 'b', 'le'], ['', 'O', 'ptions'], ['', 'A', 'dd-on Modules'], ['', 'W', 'indow'], ['', 'H', 'elp']]

const cols = [53, 86, 72, 72, 72, 72, 72, 72, 79, 79, 79, 72, 79, 79, 72, 72, 108, 108]
const letters = 'ABCDEFGHIJKLMNOPQ'.split('')
const groups = [['Reference', 1], ['Member Start - Eccentricity [in]', 3], ['Member End - Eccentricity [in]', 3], ['Cross-Section Alignment', 2], ['Transverse offset from cross-section of another obje', 4, 'left'], ['Axial offset from adjoinin', 2, 'left'], ['Member hinge location', 2, 'left pad']]
const subs = [['System'], ['e', 'i,X'], ['e', 'i,Y'], ['e', 'i,Z'], ['e', 'j,X'], ['e', 'j,Y'], ['e', 'j,Z'], ['y-Axis'], ['z-Axis'], ['Object Type'], ['Object No.'], ['y-Axis'], ['z-Axis'], ['Member St', '', 'left'], ['Member En', '', 'left'], ['Member Start'], ['Member End']]
const data = [['-6.89', '0.00'], ['-7.56', '0.00'], ['-7.56', '0.00'], ['0.00', '9.72'], ['0.00', '9.72'], ['7.56', '0.00']]

const sheetTabs = [['Nodes', 40], ['Lines', 35], ['Materials', 52], ['Surfaces', 52], ['Solids', 38], ['Openings', 55], ['Nodal Supports', 83], ['Line Supports', 75], ['Surface Supports', 92], ['Line Hinges', 66], ['Variable Thicknesses', 111], ['Cross-Sections', 80], ['Member Hinges', 84], ['Member Eccentricities', 113], ['Member Divisions', 94], ['Members', 53], ['Member Elastic Foundations', 143]]
const activeTab = ref('Member Eccentricities')
const loadCase = ref('LC1 - Self-weight')

/* ---- cross-section geometry ---- */
const ticks = Array.from({ length: 18 }, (_, i) => 468.7 + i * 49.45).map(x => `M${x} 549.5v9M${x + 15} 549.5v9`).join('')
const wallTicks = [390, 403.5, 429.5, 443.5, 469.5, 483, 509.5]
const wall = wallTicks.map(y => `M419 ${y}H425.7M1367.3 ${y}H1374`).join('') + 'M1367.3 523H1374'
const ribs = [505, 513.5, 779, 861.5, 884.8, 908, 931.8, 1014.7, 1279.5, 1288.5].map(x => `M${x} 573V615.5`).join('')
const shortRibs = [468.5, 477.5, 850.8, 942, 1315.7, 1324.5].map(x => `M${x} 581V615.5`).join('')
const supports = [425.7, 896.4, 1367.3]
</script>

<template>
  <div class="app">
    <header class="title">
      <svg class="ic" viewBox="0 0 16 16"><path d="M5 3L10 0L16 4V11L10 16L6 13Z" fill="#5f7ea6"/><path d="M8 2L14 6M7 5L13 14M16 4L8 9" stroke="#20344f" fill="none"/><text x="0" y="15" font-size="12" font-weight="bold" fill="#f5c518" font-family="Liberation Sans, sans-serif">5</text></svg>
      <h1>RFEM 5.25.01 x64 - [Kanalbrücke Ems (C))www.meyer-schubart.de*]</h1>
      <button aria-label="Minimize"><svg viewBox="0 0 11 11"><path d="M0 5.500H11" /></svg></button>
      <button aria-label="Maximize"><svg viewBox="0 0 11 11"><path d="M0.500 0.500H10.500V10.500H0.500Z" /></svg></button>
      <button aria-label="Close"><svg viewBox="0 0 11 11"><path d="M0.500 0.500L10.500 10.500M10.500 0.500L0.500 10.500" /></svg></button>
    </header>

    <nav class="menu">
      <i class="grip"></i>
      <svg class="ic" viewBox="0 0 16 16" v-html="I.logo"></svg>
      <a v-for="m in menu" :key="m[2]" href="#">{{ m[0] }}<u>{{ m[1] }}</u>{{ m[2] }}</a>
      <span class="mdi">
        <svg viewBox="0 0 42 9"><path d="M1 7.500H8M17.500 3.500H22.500V7.500H17.500ZM19.500 3V1.500H24.500V5.500H23M34 1L41 8M41 1L34 8" /></svg>
      </span>
    </nav>

    <div v-for="(line, li) in [bars1, bars2]" :key="li" class="barline">
      <div v-for="(bar, bi) in line" :key="bi" class="bar" role="toolbar">
        <i class="grip"></i>
        <template v-for="(k, i) in bar" :key="i">
          <i v-if="k === '|'" class="sep"></i>
          <i v-else-if="k === 'v'" class="drop"></i>
          <select v-else-if="k === '='" v-model="loadCase" class="combo" aria-label="Load case"><option>LC1 - Self-weight</option></select>
          <button v-else class="tool" :class="{ on: k[0] === '*' }" :aria-label="k"><svg class="ic" viewBox="0 0 16 16" v-html="I[k.replace('*', '')]"></svg></button>
        </template>
      </div>
    </div>

    <main>
      <aside>
        <div class="head"><h2>Project Navigator - Data</h2>
          <svg class="hic" viewBox="0 0 32 10"><path d="M4.500 1V5.500M9.500 1V5.500M8.500 1V5.500M4 1.500H10M2.500 5.500H11M6.500 6V9M23 1L31 9M31 1L23 9" /></svg>
        </div>
        <div class="treebox">
          <div class="treerow">
            <ul class="tree">
              <li v-for="(n, i) in rows" :key="i" :class="['lv' + n.lv, { root: n.lv === 1 }]">
                <i v-if="n.lv > 1" class="g"></i>
                <i v-if="n.lv > 2" class="g v"></i>
                <i v-if="n.lv > 0" class="g c v" :class="{ last: n.last }"><b v-if="n.ex" class="ex" :class="{ plus: n.ex === '+' }"></b></i>
                <svg class="ic" viewBox="0 0 16 16" v-html="treeIcon(n.icon)"></svg>
                <span>{{ n.label }}</span>
              </li>
            </ul>
            <div class="vsb">
              <svg viewBox="0 0 9 6"><path d="M1 5L4.500 1.500L8 5" /></svg>
              <div class="track"><div class="thumb"></div></div>
              <svg viewBox="0 0 9 6"><path d="M1 1L4.500 4.500L8 1" /></svg>
            </div>
          </div>
          <div class="hsb">
            <svg viewBox="0 0 6 9"><path d="M5 1L1.500 4.500L5 8" /></svg>
            <div class="track"><div class="thumb"></div></div>
            <svg viewBox="0 0 6 9"><path d="M1 1L4.500 4.500L1 8" /></svg>
          </div>
        </div>
        <div class="navtabs">
          <button class="cur"><svg class="ic" viewBox="0 0 16 16" v-html="I.navData"></svg>Data</button>
          <button><svg class="ic" viewBox="0 0 16 16" v-html="I.navDisp"></svg>Display</button>
          <button><svg class="ic" viewBox="0 0 16 16" v-html="I.navView"></svg>Views</button>
        </div>
      </aside>

      <section class="work">
        <div class="view">
          <svg viewBox="258 110 1340 778" preserveAspectRatio="xMidYMid meet">
            <path fill="#2929ff" stroke="#000" d="M325 344.500H340.500L342 351.500L425.700 354V532L459.500 549.500H1333.700L1367.300 532V354L1502 350L1503.500 342.500H1527L1451.500 615.500H341.500V405Z" />
            <path fill="#1f1ee4" d="M342 502.500H402.500V532H342ZM1391 502.500H1482.500L1474.500 532H1391Z" />
            <path fill="none" stroke="#06063c" :d="ticks + wall + ribs + shortRibs" />
            <path fill="none" stroke="#000" stroke-width="1" d="M327 351.500H342L348.500 369L402 370.500H425.700M364 352.500L359 369M384 353L389 370M404 353.500L399 370.500M425.700 365L416 370.500M402.500 370.500V532M402.500 523H425.700M341.500 464.500H402.500M341.500 486.500H402.500M341.500 502.500H402.500M341.500 532.500H425.700M402.500 532L425.700 555.500L459.500 573.500H1333.700L1367.300 555.500L1390.700 532M341.500 615.500L414 544V575M437.500 562V578M425.700 532V615.500M459.500 549.500V615.500M459.500 584.500H1333.700M1333.700 549.500V615.500M578.700 573L577.500 584V615.500M1214.400 573L1215.800 584V615.500M896.500 549.500V615.500M861.500 597.500H931.800M1367.300 370.500H1390L1486.700 367.500L1491.700 350.500M1389.500 353.500L1394 370.500M1409 353L1404 370M1429 352L1434 369.500M1449.500 351.500L1444.700 369M1472 351L1476.500 368M1367.300 365L1376 370M1502 349.500H1525M1390.700 370.500V532M1390.700 446.500H1498M1390.700 486.500H1487M1390.700 502.500H1482.500M1367.300 532.500H1474.500M1379.300 575V544L1451.500 615.500M1355.500 562V578M1367.300 532V615.500" />
            <path fill="none" stroke="#b9b9c0" stroke-dasharray="6 3" d="M396 516L425 532M1367.300 532L1397 516" />
            <g v-for="(x, i) in supports" :key="x">
              <path fill="#10ee10" :d="`M${x - 7} 632L${x - 19.5} 645.500H${x + 19.5}L${x + 7} 632Z`" />
              <circle :cx="x" cy="625.500" r="9.800" fill="#10e410" />
              <path fill="#40ff40" :d="`M${x} 615.700A9.800 9.800 0 0 0 ${x} 635.300Z`" />
              <path stroke="#30f830" stroke-width="2" :stroke-dasharray="i ? 'none' : '2 36'" :d="`M${x - 20} 654.500H${x + 20}`" />
            </g>
          </svg>
        </div>

        <div class="dock">
          <div class="head"><h2>1.15 Member Eccentricities</h2>
            <svg class="hic" viewBox="0 0 32 10"><path d="M4.500 1V5.500M9.500 1V5.500M8.500 1V5.500M4 1.500H10M2.500 5.500H11M6.500 6V9M23 1L31 9M31 1L23 9" /></svg>
          </div>
          <div v-for="(bar, bi) in tableBar" :key="bi" class="bar tbar" role="toolbar">
            <template v-for="(k, i) in bar" :key="i">
              <i v-if="k === '|'" class="sep"></i>
              <button v-else class="tool" :class="{ on: k[0] === '*' }" :aria-label="k"><svg class="ic" viewBox="0 0 16 16" v-html="I[k.replace('*', '')]"></svg></button>
            </template>
          </div>
          <div class="sheetwrap">
            <div class="sheetrow">
              <div class="sheet">
                <table>
                  <colgroup><col v-for="(w, i) in cols" :key="i" :style="{ width: w + 'px' }"></colgroup>
                  <thead>
                    <tr class="letters"><th class="corner" rowspan="3">Eccen.<br>No.</th><th v-for="l in letters" :key="l" :class="{ sel: l === 'A' }">{{ l }}</th></tr>
                    <tr class="grp"><th v-for="g in groups" :key="g[0]" :colspan="g[1]" :class="g[2]">{{ g[0] }}</th></tr>
                    <tr class="sub"><th v-for="(h, i) in subs" :key="i" :class="h[2]">{{ h[0] }}<small v-if="h[1]">{{ h[1] }}</small></th></tr>
                  </thead>
                  <tbody>
                    <tr v-for="(d, i) in data" :key="i">
                      <th :class="{ sel: i === 0 }">{{ i + 1 }}</th>
                      <td :class="{ focus: i === 0 }"><u>G</u>lobal</td>
                      <td class="n">0.00</td><td class="n">{{ d[0] }}</td><td class="n">{{ d[1] }}</td>
                      <td class="n">0.00</td><td class="n">{{ d[0] }}</td><td class="n">{{ d[1] }}</td>
                      <td>Middle</td><td>Middle</td><td>None</td>
                      <td class="n off">0</td><td class="off">Middle</td><td class="off">Middle</td>
                      <td v-for="q in 3" :key="q" class="ck"><input type="checkbox" :aria-label="'Option ' + q + ', row ' + (i + 1)"></td><td></td>
                    </tr>
                  </tbody>
                </table>
              </div>
              <div class="vsb">
                <svg viewBox="0 0 9 6"><path d="M1 5L4.500 1.500L8 5" /></svg>
                <div class="track"><div class="thumb"></div></div>
                <svg viewBox="0 0 9 6"><path d="M1 1L4.500 4.500L8 1" /></svg>
              </div>
            </div>
            <div class="hsb">
              <svg viewBox="0 0 6 9"><path d="M5 1L1.500 4.500L5 8" /></svg>
              <div class="track"><div class="thumb"></div></div>
              <svg viewBox="0 0 6 9"><path d="M1 1L4.500 4.500L1 8" /></svg>
            </div>
          </div>
          <div class="tabs">
            <button v-for="tb in sheetTabs" :key="tb[0]" :class="{ cur: tb[0] === activeTab }" :style="{ width: tb[1] + 'px' }" @click="activeTab = tb[0]">{{ tb[0] }}</button>
            <span class="pager">
              <button disabled aria-label="First"><svg viewBox="0 0 10 8"><path d="M1 0H2.500V8H1ZM9 0V8L4 4Z" /></svg></button>
              <button disabled aria-label="Previous"><svg viewBox="0 0 10 8"><path d="M7 0V8L3 4Z" /></svg></button>
              <button aria-label="Next"><svg viewBox="0 0 10 8"><path d="M3 0V8L7 4Z" /></svg></button>
              <button aria-label="Last"><svg viewBox="0 0 10 8"><path d="M9 0H7.500V8H9ZM1 0V8L6 4Z" /></svg></button>
            </span>
          </div>
        </div>
      </section>
    </main>

    <footer>
      <div class="modes">
        <span class="in">SNAP</span><span class="out">GRID</span><span class="in">CARTES</span><span class="in">OSNAP</span><span class="in">GLINES</span><span class="in">DXF</span>
      </div>
      <i class="cell wide"></i><i class="cell wide"></i><i class="cell"></i><i class="cell"></i><i class="cell"></i>
      <svg class="size" viewBox="0 0 12 12"><path d="M9 1h2v2h-2zM5 5h2v2h-2zM9 5h2v2h-2zM1 9h2v2h-2zM5 9h2v2h-2zM9 9h2v2h-2z" /></svg>
    </footer>
  </div>
</template>

<style>
body { margin: 0; overflow: hidden; }
</style>

<style scoped>
* { box-sizing: border-box; }
.app { height: 100vh; display: flex; flex-direction: column; border: 1px solid #0078d7; border-width: 0 1px 1px; background: #cdd2dd; font: 12px/18px Roboto, "Open Sans", sans-serif; color: #000; }
button { font: inherit; color: inherit; border: 0; background: none; padding: 0; margin: 0; }
h1, h2 { margin: 0; font-size: inherit; font-weight: 400; flex: 1; }
svg { flex: none; display: block; }
.ic { width: 16px; height: 16px; overflow: visible; }

.title { height: 31px; flex: none; background: #0078d7; color: #fff; display: flex; align-items: center; padding-left: 8px; }
.title h1 { padding-left: 5px; }
.title button { width: 46px; height: 31px; display: grid; place-items: center; }
.title button svg { width: 11px; height: 11px; fill: none; stroke: #fff; }

.menu { height: 25px; flex: none; display: flex; align-items: center; background: #cfd3dd; color: #4c5058; padding-left: 1px; }
.menu .ic { margin-right: 3px; }
.menu a { color: inherit; text-decoration: none; padding: 0 7px; white-space: nowrap; }
.mdi { margin-left: auto; padding-right: 4px; align-self: flex-end; }
.mdi svg { width: 42px; height: 9px; margin-bottom: 5px; stroke: #555b66; fill: none; }
.grip { width: 9px; height: 15px; flex: none; background: repeating-linear-gradient(#f8f9fc 0 2px, #b4b9c6 2px 3px, transparent 3px 4px) 4px 0 / 2px 100% no-repeat; }

.barline { display: flex; flex: none; gap: 1px; height: 26px; }
.barline + .barline { height: 25px; }
.bar { display: flex; align-items: center; height: 25px; background: linear-gradient(#e9edf7, #dfe3ee 50%, #cdd2de); border-bottom: 1px solid #b9bec9; border-radius: 3px; padding-right: 1px; }
.bar .grip { width: 10px; }
.tool { width: 22px; height: 21px; display: grid; place-items: center; flex: none; }
.tool.on { background: linear-gradient(#fbd9a4, #fdc069 45%, #ffe9a6); border: 1px solid #b8a07c; border-radius: 2px; }
.sep { width: 2px; height: 14px; margin: 0 3px; background: linear-gradient(90deg, #a8adb9 50%, #fff 50%); flex: none; }
.drop { width: 13px; display: flex; justify-content: center; flex: none; }
.drop::after { content: ""; border: 3px solid transparent; border-top: 4px solid #666c78; border-bottom: 0; }
.combo { width: 215px; height: 19px; margin: 0 3px 0 2px; border: 0; background: linear-gradient(45deg, transparent 50%, #777 50%) calc(100% - 7px) 8px / 4px 4px no-repeat, linear-gradient(-45deg, transparent 50%, #777 50%) calc(100% - 3px) 8px / 4px 4px no-repeat, linear-gradient(90deg, transparent calc(100% - 14px), #e4e7ee 0), #fff; border-radius: 0; appearance: none; font: inherit; color: #000; padding: 0 16px 0 3px; }

main { flex: 1; min-height: 0; display: grid; grid-template-columns: 250px minmax(0, 1fr); column-gap: 6px; border-top: 1px solid #a7acb7; }
aside { display: flex; flex-direction: column; min-height: 0; border-right: 1px solid #9aa0ab; margin-left: 1px; }
.head { height: 19px; flex: none; display: flex; align-items: center; background: #b9c0ca; color: #454a53; padding: 0 3px 1px; }
.hic { width: 32px; height: 10px; stroke: #6b7078; fill: none; }
.treebox { flex: 1; min-height: 0; margin: 2px 2px 0; border: 1px solid #8d94a3; background: #fcfbf3; display: flex; flex-direction: column; }
.treerow { flex: 1; min-height: 0; display: flex; }
.tree { flex: 1; min-width: 0; overflow: hidden; list-style: none; margin: 0; padding: 1px 0 0 2px; }
.tree li { display: flex; align-items: center; height: 18px; white-space: nowrap; }
.tree .ic { margin: 0 4px 0 2px; }
.tree .lv0 .ic { margin-left: 0; margin-right: 5px; }
.root { font-weight: 700; }
.g { width: 19px; height: 18px; flex: none; position: relative; }
.g.v { background: repeating-linear-gradient(#777 0 1px, transparent 1px 2px) 9px 0 / 1px 100% no-repeat; }
.g.c::after { content: ""; position: absolute; left: 10px; right: 0; top: 9px; height: 1px; background: repeating-linear-gradient(90deg, #777 0 1px, transparent 1px 2px); }
.g.last { background-size: 1px 50%; }
.ex { position: absolute; z-index: 1; left: 5px; top: 5px; width: 9px; height: 9px; border: 1px solid #8a8f98; border-radius: 1px; background: linear-gradient(#2a4a9a, #2a4a9a) center / 5px 1px no-repeat, #fff; }
.ex.plus { background: linear-gradient(#2a4a9a, #2a4a9a) center / 5px 1px no-repeat, linear-gradient(#2a4a9a, #2a4a9a) center / 1px 5px no-repeat, #fff; }

.vsb { width: 16px; flex: none; background: #f0f0f0; display: flex; flex-direction: column; align-items: center; padding: 6px 0; gap: 6px; }
.vsb svg { width: 9px; height: 6px; fill: none; stroke: #505050; stroke-width: 2; }
.vsb .track { flex: 1; align-self: stretch; }
.vsb .thumb { height: 48%; background: #cdcdcd; }
.hsb { height: 17px; flex: none; background: #f0f0f0; display: flex; align-items: center; padding: 0 5px; gap: 6px; }
.hsb svg { width: 6px; height: 9px; fill: none; stroke: #505050; stroke-width: 2; }
.hsb .track { flex: 1; align-self: stretch; }
.hsb .thumb { height: 100%; background: #cdcdcd; }
.treebox .hsb { padding-right: 21px; }
.treebox .hsb .thumb { width: 35%; }
.navtabs { height: 23px; flex: none; display: flex; align-items: flex-start; gap: 5px; border-top: 1px solid #8d94a3; color: #4c5058; padding-left: 2px; }
.navtabs button { display: flex; align-items: center; gap: 2px; height: 20px; padding: 0 2px; }
.navtabs .cur { background: #eef1f6; border-radius: 0 0 3px 3px; box-shadow: 0 0 0 1px #b9dfe6; }

.work { display: flex; flex-direction: column; min-width: 0; min-height: 0; }
.view { flex: 1; min-height: 0; background: #fff; border: 1px solid #696969; border-width: 1px 1px 0 1px; border-right-color: #e3e3e3; }
.view svg { width: 100%; height: 100%; }
.dock { flex: none; display: flex; flex-direction: column; border-top: 6px solid #cfd4df; background: #f0f0f0; padding-bottom: 17px; }
.tbar { border-radius: 0; border-bottom: 1px solid #696969; padding-left: 8px; }
.sheetwrap { border: solid #696969; border-width: 0 1px 1px; padding: 3px 2px 4px; }
.sheetrow { display: flex; border-top: 1px solid #696969; }
.sheet { flex: 1; min-width: 0; overflow: hidden; font: 13px/18px "Liberation Sans", Arial, sans-serif; }
table { table-layout: fixed; border-collapse: separate; border-spacing: 0; width: 1398px; }
th, td { padding: 0; border: solid #a0a0a0; border-width: 0 1px 1px 0; overflow: hidden; white-space: nowrap; height: 19px; line-height: 18px; font-weight: 400; }
.letters th { background: #e0e0e0; height: 17px; line-height: 16px; border-color: #696969; box-shadow: inset 1px 1px #fff; }
.letters th.corner { line-height: 16px; border-left: 1px solid #808080; border-color: #808080; box-shadow: none; padding-top: 11px; }
.letters th.sel, tbody th.sel { background: #0078d7; color: #fff; }
.grp th, .sub th { background: #f0f0f0; }
.grp th { border-bottom: 0; text-align: center; height: 20px; }
.grp th:nth-child(1) { border-bottom: 0; }
.sub th.left, .grp th.left { text-align: left; }
.grp th.pad { padding-left: 3px; }
.sub small { font-size: 11px; position: relative; top: 1px; margin-left: 1px; }
tbody th { background: #e0e0e0; border-color: #696969; border-left: 1px solid #808080; box-shadow: inset 1px 1px #fff; }
td { background: #fff; padding-left: 4px; }
td.n { text-align: right; padding: 0 4px 0 0; }
td.off { background: #f0f0f0; }
td.focus { outline: 1px dotted #000; outline-offset: -1px; }
td.ck { text-align: center; padding: 0; line-height: 15px; }
td.ck input { appearance: none; width: 14px; height: 14px; margin: 0; vertical-align: middle; background: #fff; border: 1px solid #000; box-shadow: 1px 1px #000; }
.dock .vsb .thumb { height: 76%; }
.dock .hsb { margin-top: 8px; border-top: 1px solid #fff; border-bottom: 1px solid #a0a0a0; }
.dock .hsb .thumb { width: 89%; }

.tabs { display: flex; height: 18px; font: 11px/16px "Liberation Sans", Arial, sans-serif; padding-left: 1px; }
.tabs > button { height: 17px; flex: none; background: #e0e0e0; border: solid #696969; border-width: 0 1px 1px 0; border-radius: 0 0 5px 5px; white-space: nowrap; overflow: hidden; text-align: center; }
.tabs > button.cur { background: #fff; }
.pager { margin-left: auto; display: flex; }
.pager button { width: 16px; height: 16px; display: grid; place-items: center; border: solid #696969; border-width: 0 1px 1px 0; background: #f0f0f0; }
.pager svg { width: 10px; height: 8px; fill: #000; }
.pager button:disabled svg { fill: #a0a0a0; }

footer { height: 22px; flex: none; display: flex; align-items: stretch; justify-content: flex-end; background: linear-gradient(#d9dce6, #c8ccd6 30%, #a9aeb8 50%, #bcc0ca); border-top: 1px solid #a9aeb8; font: 11px/17px "Liberation Sans", Arial, sans-serif; color: #2c3138; }
.modes { display: flex; gap: 2px; padding: 1px 0; margin-right: 102px; }
.modes span { padding: 0 2px 0 1px; border: 1px solid; }
.modes .in { border-color: #111 #fff #fff #111; }
.modes .out { border-color: #fff #8b909a #8b909a #fff; line-height: 15px; padding-right: 4px; }
.cell { width: 74px; margin: 2px 0; border-left: 1px solid #8b909a; }
.cell.wide { width: 88px; }
.size { width: 12px; height: 12px; align-self: flex-end; fill: #70757f; margin-left: 4px; }
</style>
